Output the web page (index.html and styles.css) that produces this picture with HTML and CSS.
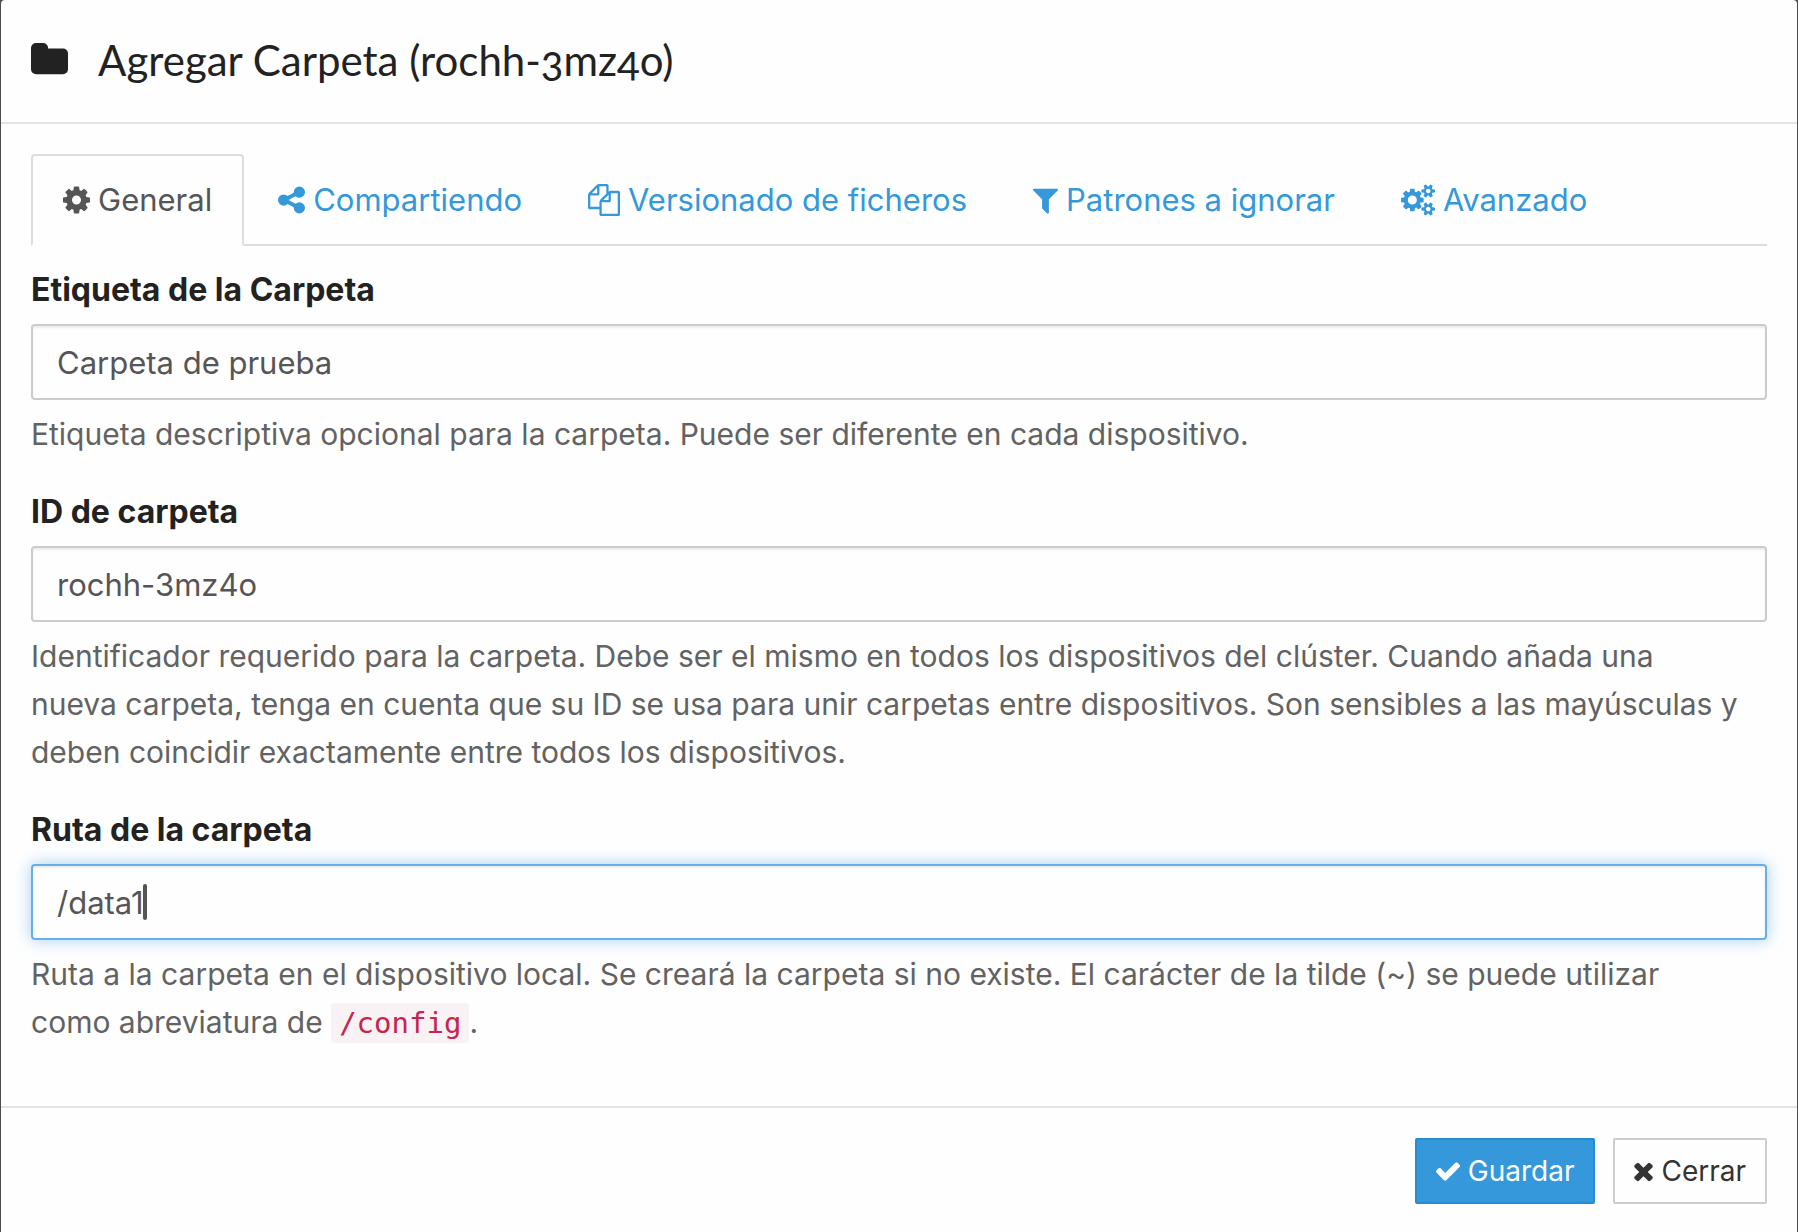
FILE: index.html
```html
<!DOCTYPE html>
<html lang="es">
<head>
<meta charset="utf-8">
<meta name="viewport" content="width=device-width, initial-scale=1">
<title>Agregar Carpeta</title>
<link rel="stylesheet" href="styles.css">
</head>
<body class="backdrop">
<main class="modal">
  <header class="modal-header">
    <svg class="title-icon" viewBox="64 0 1664 1792" aria-hidden="true"><path d="M1728 608v704q0 92-66 158t-158 66h-1216q-92 0-158-66t-66-158v-960q0-92 66-158t158-66h320q92 0 158 66t66 158v32h672q92 0 158 66t66 158z"/></svg>
    <h1 class="modal-title">Agregar Carpeta (rochh-3mz4o)</h1>
  </header>

  <form class="modal-form">
    <div class="modal-body">
      <nav class="tabs">
        <a class="tab tab-active" href="#general" aria-current="page">
          <svg class="icon icon-cog" viewBox="128 0 1536 1792" aria-hidden="true"><path d="M1152 896q0-106-75-181t-181-75-181 75-75 181 75 181 181 75 181-75 75-181zm512-109v222q0 12-8 23t-20 13l-185 28q-19 54-39 91 35 50 107 138 10 12 10 25t-9 23q-27 37-99 108t-94 71q-12 0-26-9l-138-108q-44 23-91 38-16 136-29 186-7 28-36 28h-222q-14 0-24.500-8.500t-11.500-21.500l-28-184q-49-16-90-37l-141 107q-10 9-25 9-14 0-25-11-126-114-165-168-7-10-7-23 0-12 8-23 15-21 51-66.500t54-70.500q-27-50-41-99l-183-27q-13-2-21-12.500t-8-23.500v-222q0-12 8-23t19-13l186-28q14-46 39-92-40-57-107-138-10-12-10-24 0-10 9-23 26-36 98.500-107.500t94.500-71.500q13 0 26 10l138 107q44-23 91-38 16-136 29-186 7-28 36-28h222q14 0 24.500 8.500t11.500 21.500l28 184q49 16 90 37l142-107q9-9 24-9 13 0 25 10 129 119 165 170 7 8 7 22 0 12-8 23-15 21-51 66.500t-54 70.500q26 50 41 98l183 28q13 2 21 12.500t8 23.500z"/></svg>
          <span>General</span>
        </a>
        <a class="tab" href="#compartiendo">
          <svg class="icon icon-share" viewBox="128 0 1536 1792" aria-hidden="true"><path d="M1344 1024q133 0 226.500 93.500t93.500 226.500-93.500 226.500-226.500 93.500-226.500-93.500-93.500-226.500q0-12 2-34l-360-180q-92 86-218 86-133 0-226.500-93.500t-93.500-226.500 93.500-226.500 226.500-93.500q126 0 218 86l360-180q-2-22-2-34 0-133 93.500-226.500t226.500-93.500 226.500 93.500 93.500 226.500-93.500 226.500-226.500 93.500q-126 0-218-86l-360 180q2 22 2 34t-2 34l360 180q92-86 218-86z"/></svg>
          <span>Compartiendo</span>
        </a>
        <a class="tab" href="#versionado">
          <svg class="icon icon-files" viewBox="0 0 1792 1792" aria-hidden="true"><path d="M1696 384q40 0 68 28t28 68v1216q0 40-28 68t-68 28h-960q-40 0-68-28t-28-68v-288h-544q-40 0-68-28t-28-68v-672q0-40 20-88t48-76l408-408q28-28 76-48t88-20h416q40 0 68 28t28 68v328q68-40 128-40h416zm-544 213l-299 299h299v-299zm-640-384l-299 299h299v-299zm196 647l316-316v-416h-384v416q0 40-28 68t-68 28h-416v640h512v-256q0-40 20-88t48-76zm956 804v-1152h-384v416q0 40-28 68t-68 28h-416v640h896z"/></svg>
          <span>Versionado de ficheros</span>
        </a>
        <a class="tab" href="#patrones">
          <svg class="icon icon-filter" viewBox="192 0 1408 1792" aria-hidden="true"><path d="M1595 295q17 41-14 70l-493 493v742q0 42-39 59-13 5-25 5-27 0-45-19l-256-256q-19-19-19-45v-486l-493-493q-31-29-14-70 17-39 59-39h1280q42 0 59 39z"/></svg>
          <span>Patrones a ignorar</span>
        </a>
        <a class="tab" href="#avanzado">
          <svg class="icon icon-cogs" viewBox="0 0 1920 1792" aria-hidden="true"><path d="M896 896q0-106-75-181t-181-75-181 75-75 181 75 181 181 75 181-75 75-181zm768 512q0-52-38-90t-90-38-90 38-38 90q0 53 37.500 90.500t90.500 37.500 90.500-37.500 37.500-90.500zm0-1024q0-52-38-90t-90-38-90 38-38 90q0 53 37.500 90.500t90.500 37.500 90.500-37.500 37.500-90.500zm-384 421v185q0 10-7 19.500t-16 10.500l-155 24q-11 35-32 76 34 48 90 115 7 11 7 20 0 12-7 19-23 30-82.500 89.500t-78.500 59.500q-11 0-21-7l-115-90q-37 19-77 31-11 108-23 155-7 24-30 24h-186q-11 0-20-7.500t-10-17.500l-23-153q-34-10-75-31l-118 89q-7 7-20 7-11 0-21-8-144-133-144-160 0-9 7-19 10-14 41-53t47-61q-23-44-35-82l-152-24q-10-1-17-9.500t-7-19.500v-185q0-10 7-19.500t16-10.500l155-24q11-35 32-76-34-48-90-115-7-11-7-20 0-12 7-20 22-30 82-89t79-59q11 0 21 7l115 90q34-18 77-32 11-108 23-154 7-24 30-24h186q11 0 20 7.500t10 17.500l23 153q34 10 75 31l118-89q8-7 20-7 11 0 21 8 144 133 144 160 0 8-7 19-12 16-42 54t-45 60q23 48 34 82l152 23q10 2 17 10.500t7 19.500zm640 533v140q0 16-149 31-12 27-30 52 51 113 51 138 0 4-4 7-122 71-124 71-8 0-46-47t-52-68q-20 2-30 2t-30-2q-14 21-52 68t-46 47q-2 0-124-71-4-3-4-7 0-25 51-138-18-25-30-52-149-15-149-31v-140q0-16 149-31 13-29 30-52-51-113-51-138 0-4 4-7 4-2 35-20t59-34 30-16q8 0 46 46.500t52 67.500q20-2 30-2t30 2q51-71 92-112l6-2q4 0 124 70 4 3 4 7 0 25-51 138 17 23 30 52 149 15 149 31zm0-1024v140q0 16-149 31-12 27-30 52 51 113 51 138 0 4-4 7-122 71-124 71-8 0-46-47t-52-68q-20 2-30 2t-30-2q-14 21-52 68t-46 47q-2 0-124-71-4-3-4-7 0-25 51-138-18-25-30-52-149-15-149-31v-140q0-16 149-31 13-29 30-52-51-113-51-138 0-4 4-7 4-2 35-20t59-34 30-16q8 0 46 46.500t52 67.500q20-2 30-2t30 2q51-71 92-112l6-2q4 0 124 70 4 3 4 7 0 25-51 138 17 23 30 52 149 15 149 31z"/></svg>
          <span>Avanzado</span>
        </a>
      </nav>

      <section class="fields" id="general">
        <div class="field">
          <label class="field-label" for="folder-label">Etiqueta de la Carpeta</label>
          <input class="field-input" id="folder-label" type="text" value="Carpeta de prueba">
          <p class="field-help">Etiqueta descriptiva opcional para la carpeta. Puede ser diferente en cada dispositivo.</p>
        </div>
        <div class="field">
          <label class="field-label" for="folder-id">ID de carpeta</label>
          <input class="field-input" id="folder-id" type="text" value="rochh-3mz4o">
          <p class="field-help">Identificador requerido para la carpeta. Debe ser el mismo en todos los dispositivos del clúster. Cuando añada una<br>nueva carpeta, tenga en cuenta que su ID se usa para unir carpetas entre dispositivos. Son sensibles a las mayúsculas y<br>deben coincidir exactamente entre todos los dispositivos.</p>
        </div>
        <div class="field">
          <label class="field-label" for="folder-path">Ruta de la carpeta</label>
          <div class="input-wrap">
            <input class="field-input field-input-focus" id="folder-path" type="text" value="/data1">
            <span class="caret" aria-hidden="true"></span>
          </div>
          <p class="field-help">Ruta a la carpeta en el dispositivo local. Se creará la carpeta si no existe. El carácter de la tilde (~) se puede utilizar<br>como abreviatura de <code class="code">/config</code>.</p>
        </div>
      </section>
    </div>

    <footer class="modal-footer">
      <button class="btn btn-primary" type="button">
        <svg class="btn-icon icon-check" viewBox="121 0 1550 1792" aria-hidden="true"><path d="M1671 566q0 40-28 68l-724 724-136 136q-28 28-68 28t-68-28l-136-136-362-362q-28-28-28-68t28-68l136-136q28-28 68-28t68 28l294 295 656-657q28-28 68-28t68 28l136 136q28 28 28 68z"/></svg>
        <span>Guardar</span>
      </button>
      <button class="btn btn-default" type="button">
        <svg class="btn-icon icon-times" viewBox="302 0 1188 1792" aria-hidden="true"><path d="M1490 1322q0 40-28 68l-136 136q-28 28-68 28t-68-28l-294-294-294 294q-28 28-68 28t-68-28l-136-136q-28-28-28-68t28-68l294-294-294-294q-28-28-28-68t28-68l136-136q28-28 68-28t68 28l294 294 294-294q28-28 68-28t68 28l136 136q28 28 28 68t-28 68l-294 294 294 294q28 28 28 68z"/></svg>
        <span>Cerrar</span>
      </button>
    </footer>
  </form>
</main>
</body>
</html>
```
FILE: styles.css
```css
* {
  box-sizing: border-box;
}

.backdrop {
  margin: 0;
  padding: 0 1px;
  min-height: 100vh;
  display: flex;
  flex-direction: column;
  background: #4d4d4d;
  color: #222;
  font-family: Inter, "Liberation Sans", sans-serif;
  font-size: 31px;
  line-height: 48px;
}

.modal {
  flex: 1;
  background: #fefefe;
  border-radius: 4px 4px 0 0;
}

.modal-header {
  display: flex;
  align-items: center;
  gap: 30px;
  padding: 30px 30px 32px;
  border-bottom: 2px solid #e5e5e5;
}

.title-icon {
  width: 37px;
  height: 40px;
  fill: currentColor;
}

.modal-title {
  margin: 0;
  font-family: Lato, sans-serif;
  font-size: 42px;
  font-weight: 400;
  font-variant-numeric: oldstyle-nums;
  line-height: 60px;
}

.modal-body {
  padding: 30px 30px 60px;
}

.tabs {
  display: flex;
  gap: 2px;
  border-bottom: 2px solid #ddd;
}

.tab {
  display: flex;
  align-items: center;
  gap: 8px;
  margin-bottom: -2px;
  padding: 20px 30px;
  border: 2px solid transparent;
  border-radius: 4px 4px 0 0;
  color: #3498db;
  text-decoration: none;
  white-space: nowrap;
}

.tab-active {
  border-color: #ddd;
  border-bottom-color: #fefefe;
  background: #fefefe;
  color: #555;
}

.icon {
  height: 32px;
  fill: currentColor;
}

.icon-cog,
.icon-share {
  width: 27px;
}

.icon-files {
  width: 32px;
}

.icon-filter {
  width: 25px;
}

.icon-cogs {
  width: 34px;
}

.fields {
  display: flex;
  flex-direction: column;
  gap: 30px;
  padding-top: 20px;
}

.field {
  display: flex;
  flex-direction: column;
  gap: 10px;
}

.field-label {
  font-size: 32px;
  font-weight: 700;
}

.field-input {
  display: block;
  width: 100%;
  height: 76px;
  padding: 0 24px;
  border: 2px solid #ccc;
  border-radius: 4px;
  outline: 0;
  background: #fefefe;
  box-shadow: inset 0 2px 2px rgba(0, 0, 0, 0.075);
  color: #555;
  font: inherit;
}

.field-input-focus {
  border-color: #66afe9;
  box-shadow: inset 0 2px 2px rgba(0, 0, 0, 0.075), 0 0 16px rgba(102, 175, 233, 0.6);
}

.input-wrap {
  position: relative;
}

.caret {
  position: absolute;
  top: 20px;
  left: 112px;
  width: 4px;
  height: 36px;
  border-radius: 2px;
  background: #555;
}

.field-help {
  margin: 0;
  color: #626262;
  font-size: 30px;
}

.code {
  padding: 3px 8px;
  border-radius: 4px;
  background: #f9f2f4;
  color: #c7254e;
  font-family: "DejaVu Sans Mono", monospace;
  font-size: 29px;
  line-height: 32px;
}

.modal-footer {
  display: flex;
  justify-content: flex-end;
  gap: 18px;
  padding: 30px 30px 28px;
  border-top: 2px solid #e5e5e5;
}

.btn {
  display: flex;
  align-items: center;
  gap: 8px;
  height: 66px;
  padding: 0 19px;
  border: 2px solid #ccc;
  border-radius: 2px;
  background: #fefefe;
  color: #333;
  font: inherit;
  font-size: 28px;
}

.btn-primary {
  border-color: #258cd1;
  background: #3498db;
  color: #fff;
}

.btn-icon {
  height: 28px;
  fill: currentColor;
}

.icon-check {
  width: 24px;
}

.icon-times {
  width: 19px;
}
```
